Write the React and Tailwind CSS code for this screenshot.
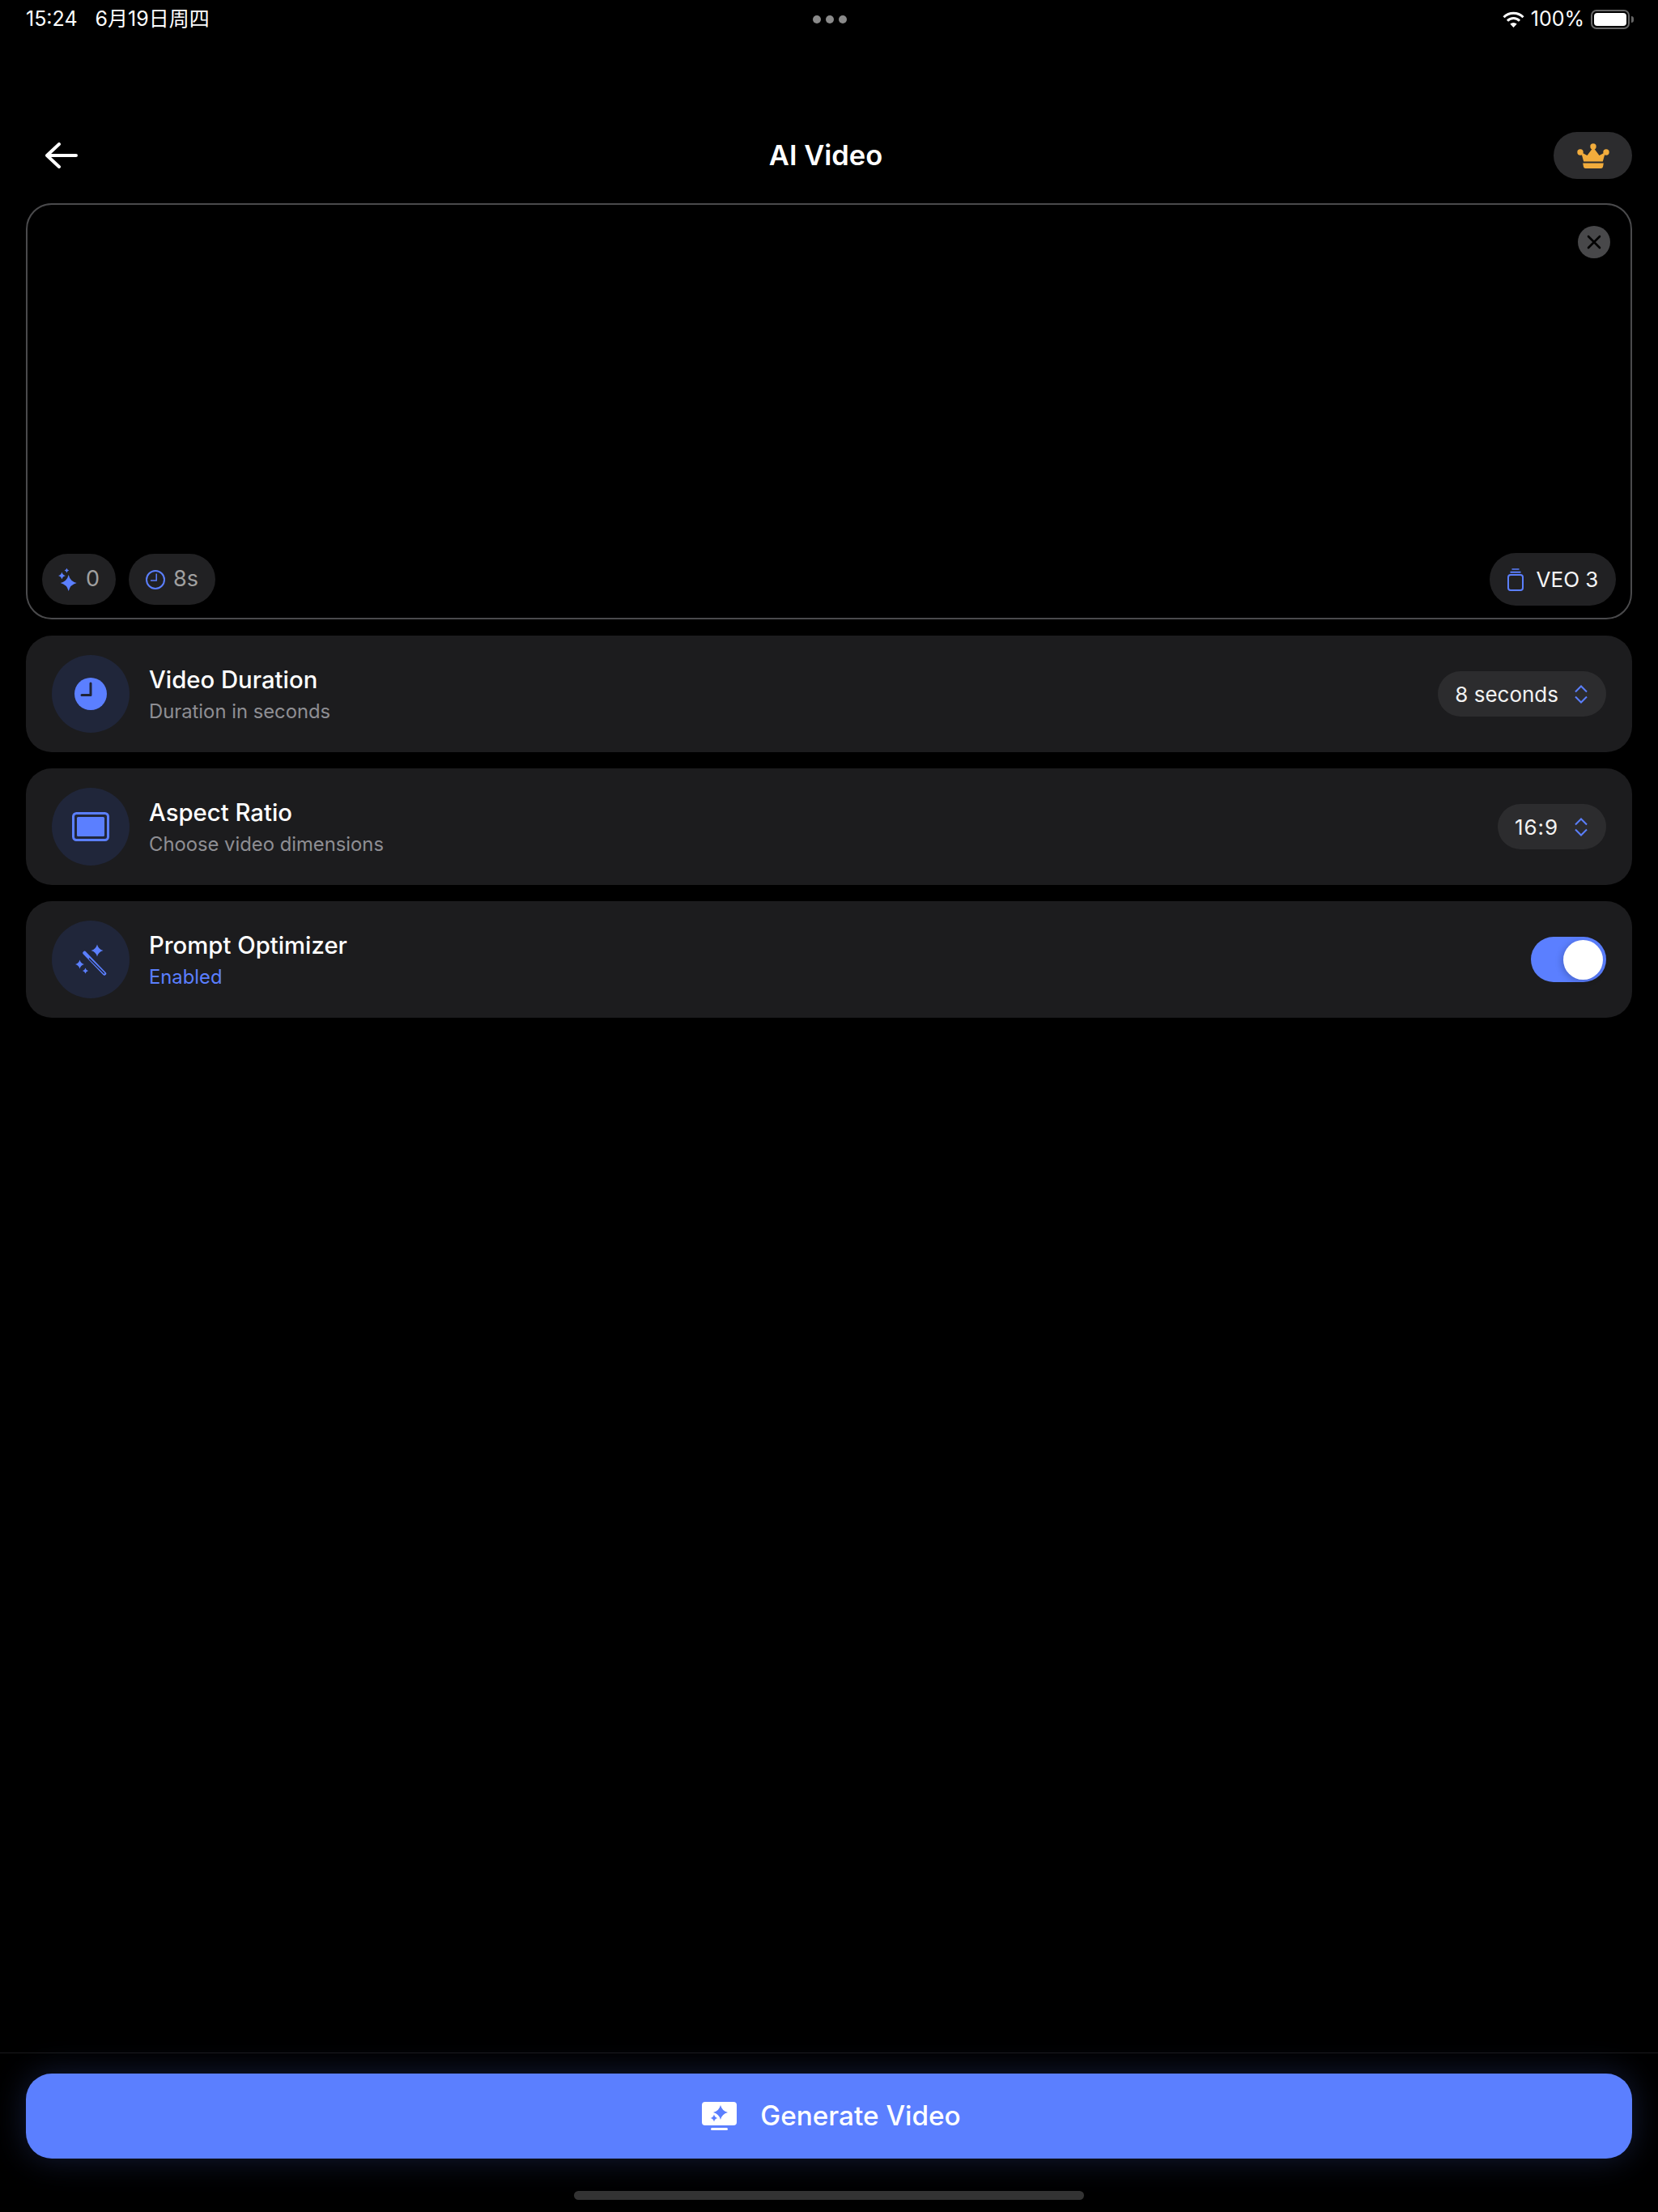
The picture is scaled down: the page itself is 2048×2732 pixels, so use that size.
import React from 'react';

const BLUE = '#5b7fff';

// four point star used by all the sparkle icons
const star = (cx, cy, r) => {
    const k = r * 0.2;
    return `M${cx} ${cy - r}Q${cx + k} ${cy - k} ${cx + r} ${cy}Q${cx + k} ${cy + k} ${cx} ${cy + r}Q${cx - k} ${cy + k} ${cx - r} ${cy}Q${cx - k} ${cy - k} ${cx} ${cy - r}Z`;
};

const Wifi = () => (
    <svg width="27" height="20" viewBox="0 0 27 20" fill="none" stroke="white" strokeWidth="3">
        <path d="M1.5 7.2A17 17 0 0 1 25.5 7.2" />
        <path d="M6 11.7A10.6 10.6 0 0 1 21 11.7" />
        <path d="M13.5 20L9.3 15.6A6 6 0 0 1 17.7 15.6Z" fill="white" stroke="none" />
    </svg>
);

const Crown = () => (
    <svg width="40" height="31" viewBox="0 0 40 31" fill="#f2ac3c">
        <circle cx="20" cy="4" r="3.7" />
        <circle cx="4" cy="11" r="3.7" />
        <circle cx="36" cy="11" r="3.7" />
        <path d="M5 11L12.5 15L20 5L27.5 15L35 11L31.8 22.5H8.2Z" />
        <path d="M7.2 24.5H32.8L32 29A2.5 2.5 0 0 1 29.6 31H10.4A2.5 2.5 0 0 1 8 29Z" />
    </svg>
);

const SparkleSmall = () => (
    <svg width="24" height="30" viewBox="0 0 24 30" fill={BLUE}>
        <path d={star(12.7, 19, 10)} />
        <path d={star(4.4, 10, 4.6)} />
        <path d={star(10.4, 3.6, 2.8)} />
    </svg>
);

const ClockOutline = () => (
    <svg width="24" height="24" viewBox="0 0 24 24" fill="none" stroke={BLUE}>
        <circle cx="12" cy="12" r="11" strokeWidth="2" />
        <path d="M13.2 4.5V13H6" strokeWidth="1.5" />
    </svg>
);

const VeoIcon = () => (
    <svg width="20" height="28" viewBox="0 0 20 28" fill="none" stroke={BLUE}>
        <rect x="1" y="8" width="18" height="19" rx="3" strokeWidth="2" />
        <path d="M3.5 4.7H16.5" strokeWidth="2" />
        <path d="M5.5 1H14.5" strokeWidth="1.5" />
    </svg>
);

const Updown = () => (
    <svg width="16" height="23" viewBox="0 0 16 23" fill="none" stroke={BLUE} strokeWidth="2">
        <path d="M1 8.5L8 1.5L15 8.5" />
        <path d="M1 14.5L8 21.5L15 14.5" />
    </svg>
);

const ClockFilled = () => (
    <svg width="40" height="40" viewBox="0 0 40 40">
        <circle cx="20" cy="20" r="20" fill={BLUE} />
        <path d="M20 7V21.5H9" fill="none" stroke="#1f2437" strokeWidth="3" strokeLinecap="round" strokeLinejoin="round" />
    </svg>
);

const RatioIcon = () => (
    <svg width="46" height="36" viewBox="0 0 46 36">
        <rect x="1.5" y="1.5" width="43" height="33" rx="4" fill="none" stroke={BLUE} strokeWidth="3" />
        <rect x="6" y="6" width="34" height="24" rx="1.5" fill={BLUE} />
    </svg>
);

const WandIcon = () => (
    <svg width="39" height="39" viewBox="0 0 39 39" fill={BLUE}>
        <path d={star(27, 8, 7.5)} />
        <path d={star(5.5, 25, 5.5)} />
        <path d={star(12.5, 33, 3.6)} />
        <path d="M11.5 11L36 36.5" stroke={BLUE} strokeWidth="4.5" strokeLinecap="round" />
        <path d="M17.5 18L35.5 36" stroke="#1f2437" strokeWidth="1.4" strokeLinecap="round" />
    </svg>
);

const GenerateIcon = () => (
    <svg width="43" height="35" viewBox="0 0 43 35">
        <rect width="43" height="29" rx="4" fill="white" />
        <rect x="11" y="32" width="21" height="3" rx="1.5" fill="white" />
        <path d={star(23, 13, 9)} fill={BLUE} />
        <path d={star(15, 20, 6)} fill="white" />
        <path d={star(15, 20, 4.5)} fill={BLUE} />
    </svg>
);

const Chip = ({ icon, label, className }) => (
    <div className={`flex items-center rounded-full bg-[#212123] ${className}`}>
        {icon}
        <span>{label}</span>
    </div>
);

const SettingRow = ({ icon, title, subtitle, subtitleClass, children }) => (
    <div className="flex h-[144px] items-center justify-between rounded-[32px] bg-[#1c1c1e] pl-[32px] pr-[32px]">
        <div className="flex items-center gap-[24px]">
            <div className="flex h-[96px] w-[96px] items-center justify-center rounded-full bg-[#20263a]">
                {icon}
            </div>
            <div className="flex flex-col pt-[3px]">
                <span className="text-[29.3px] font-medium leading-[40px] text-white">{title}</span>
                <span className={`mt-[1px] text-[23.8px] leading-[36px] ${subtitleClass}`}>{subtitle}</span>
            </div>
        </div>
        {children}
    </div>
);

const SelectPill = ({ value, className = '' }) => (
    <div className="flex h-[56px] items-center gap-[20px] rounded-full bg-[#2c2c2e] pl-[21px] pr-[23px] text-[26px] text-[#f2f2f2]">
        <span className={className}>{value}</span>
        <Updown />
    </div>
);

export default function App() {
    return (
        <div
            className="flex h-[2732px] w-[2048px] flex-col bg-black text-white"
            style={{ fontFamily: 'Inter, "Noto Sans CJK SC", sans-serif' }}
        >
            <div className="grid h-[48px] grid-cols-3 items-center pl-[32px] pr-[30px] text-[25px]">
                <div className="flex gap-[22px]">
                    <span>15:24</span>
                    <span>6月19日周四</span>
                </div>
                <div className="flex justify-center gap-[6px]">
                    <span className="h-[10px] w-[10px] rounded-full bg-[#8a8a8a]" />
                    <span className="h-[10px] w-[10px] rounded-full bg-[#8a8a8a]" />
                    <span className="h-[10px] w-[10px] rounded-full bg-[#8a8a8a]" />
                </div>
                <div className="flex items-center justify-end gap-[8px]">
                    <Wifi />
                    <span>100%</span>
                    <div className="flex items-center gap-[2px]">
                        <div className="h-[24px] w-[48px] rounded-[7px] border-2 border-[#666] p-[2px]">
                            <div className="h-full w-full rounded-[4px] bg-white" />
                        </div>
                        <div className="h-[8px] w-[3px] rounded-r-full bg-[#666]" />
                    </div>
                </div>
            </div>

            <div className="mt-[115px] flex h-[58px] items-center pl-[56px] pr-[32px]">
                <div className="w-[97px]">
                    <svg width="40" height="32" viewBox="0 0 40 32" fill="none" stroke="white" strokeWidth="4" strokeLinecap="round" strokeLinejoin="round">
                        <path d="M38 16H2M17 2L2 16L17 30" />
                    </svg>
                </div>
                <h1 className="flex-1 pr-[32px] text-center text-[34.5px] font-semibold leading-none">AI Video</h1>
                <div className="flex h-[58px] w-[97px] items-center justify-center rounded-full bg-[#2c2c2e]">
                    <Crown />
                </div>
            </div>

            <div className="mx-[32px] mt-[30px] flex h-[514px] flex-col justify-between rounded-[32px] border-2 border-[#4a4a4c] pb-[15px] pl-[18px] pr-[18px] pt-[26px]">
                <div className="flex justify-end pr-[7px]">
                    <div className="flex h-[40px] w-[40px] items-center justify-center rounded-full bg-[#48484a]">
                        <svg width="18" height="18" viewBox="0 0 18 18" stroke="black" strokeWidth="2.6" strokeLinecap="round">
                            <path d="M2 2L16 16M16 2L2 16" />
                        </svg>
                    </div>
                </div>
                <div className="flex items-center justify-between">
                    <div className="flex gap-[16px] text-[27px] text-[#a0a0a0]">
                        <Chip icon={<SparkleSmall />} label="0" className="h-[63px] w-[91px] justify-center gap-[10px]" />
                        <Chip icon={<ClockOutline />} label="8s" className="h-[63px] w-[107px] justify-center gap-[10px]" />
                    </div>
                    <Chip icon={<VeoIcon />} label="VEO 3" className="h-[65px] w-[156px] justify-center gap-[16px] text-[26px] text-[#f5f5f5]" />
                </div>
            </div>

            <div className="mx-[32px] mt-[20px] flex flex-col gap-[20px]">
                <SettingRow icon={<ClockFilled />} title="Video Duration" subtitle="Duration in seconds" subtitleClass="text-[#8e8e93]">
                    <SelectPill value="8 seconds" />
                </SettingRow>
                <SettingRow icon={<RatioIcon />} title="Aspect Ratio" subtitle="Choose video dimensions" subtitleClass="text-[#8e8e93]">
                    <SelectPill value="16:9" className="tracking-[0.9px]" />
                </SettingRow>
                <SettingRow icon={<WandIcon />} title="Prompt Optimizer" subtitle="Enabled" subtitleClass="text-[#5b7fff]">
                    <div className="flex h-[56px] w-[93px] items-center justify-end rounded-full bg-[#5b7fff] pr-[4px]">
                        <div className="h-[49px] w-[49px] rounded-full bg-white shadow-[-2px_2px_8px_rgba(0,0,0,0.2)]" />
                    </div>
                </SettingRow>
            </div>

            <div className="mt-auto border-t border-[#1a1a1c] px-[32px] pt-[25px]">
                <div className="flex h-[105px] items-center justify-center gap-[29px] rounded-[32px] bg-[#5b7fff] pl-[6px] shadow-[0_0_40px_rgba(91,127,255,0.22)]">
                    <GenerateIcon />
                    <span className="text-[33.3px] font-medium text-white">Generate Video</span>
                </div>
            </div>
            <div className="mb-[15px] mt-[40px] flex justify-center">
                <div className="h-[11px] w-[630px] rounded-full bg-[#333]" />
            </div>
        </div>
    );
}
